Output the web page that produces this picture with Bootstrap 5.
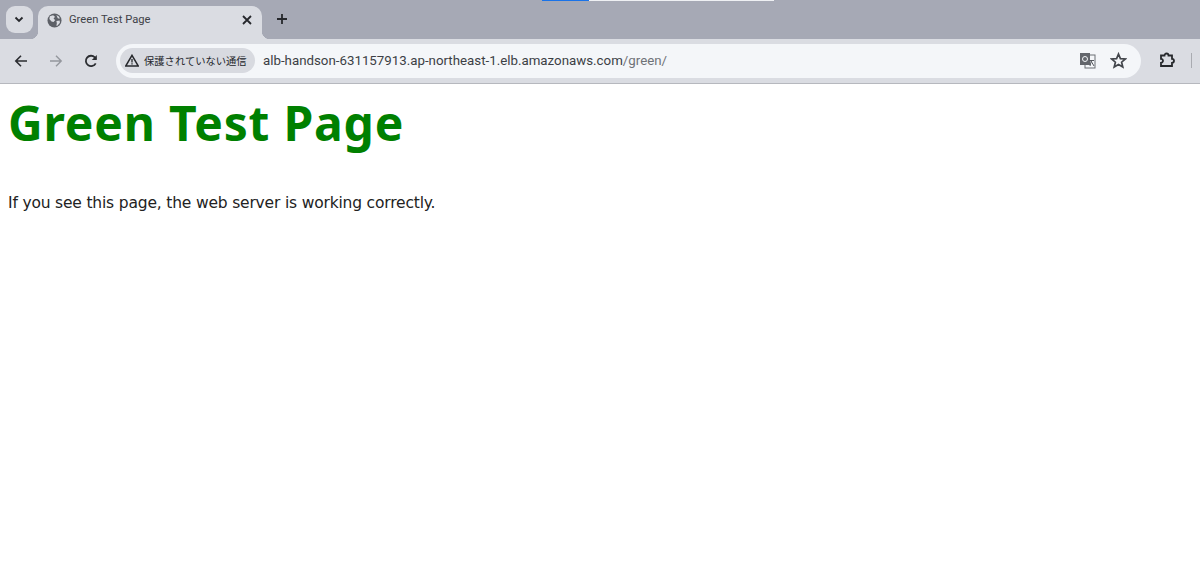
<!DOCTYPE html>
<html lang="ja">
<head>
<meta charset="utf-8">
<title>Green Test Page</title>
<link href="https://cdn.jsdelivr.net/npm/bootstrap@5.3.0/dist/css/bootstrap.min.css" rel="stylesheet">
<style>
html,body{height:100%;overflow:hidden;background:#fff}
body{font-family:"Roboto","Noto Sans CJK JP",sans-serif}
.strip{height:39px;background:#a6a9b5;position:relative;padding-left:6px}
.loadline{position:absolute;top:0;left:542px;width:232px;height:1px;background:linear-gradient(90deg,#1a73e8 0,#1a73e8 47px,#eef0f3 47px)}
.tabmenu{width:27px;height:27px;margin-top:6px;background:#d9dbe1;border-radius:9px;margin-right:5px;padding-right:2px}
.chrometab{width:224px;height:33px;margin-top:6px;background:#dadce2;border-radius:10px 10px 0 0;padding:0 10px 5px 9px;position:relative}
.chrometab::before,.chrometab::after{content:"";position:absolute;bottom:0;width:8px;height:8px}
.chrometab::before{left:-8px;background:radial-gradient(circle at 0 0,transparent 8px,#dadce2 8.5px)}
.chrometab::after{right:-8px;background:radial-gradient(circle at 100% 0,transparent 8px,#dadce2 8.5px)}
.tabtitle{font-size:11.2px;color:#3f4248;margin-left:7px}
.newtab{width:24px;height:24px;margin:7px 0 0 6px}
.toolbar{height:45px;background:#dadce2;border-bottom:1px solid #b6b8be;padding:0 8px 1px 9px}
.navslot{width:24px;height:24px;margin-right:11px;flex:none}
.omni{width:1025px;height:34px;margin-left:2px;flex:none;background:#f4f6f9;border-radius:17px;padding:0 14px 0 4px}
.chipbox{height:25px;width:135px;flex:none;background:#d8dae0;border-radius:13px;padding:0 0 0 5px;font-size:10.3px;color:#24262b;white-space:nowrap}
.chiptext{margin-left:5px;font-family:"Noto Sans CJK JP",sans-serif}
.urltext{font-size:13.3px;color:#3c3f45;margin-left:8px;white-space:nowrap}
.urlpath{color:#6f7277}
.transicon{margin-right:14px}
.extslot{margin-left:17px}
.sepbar{width:1px;height:15px;background:#a9abb1;margin-left:16px}
.pagebody{padding:0 8px}
.pagehead{color:#008000;font-family:"Noto Sans","Noto Sans CJK JP",sans-serif;font-size:48px;font-weight:700;line-height:56px;margin:11px 0 0;letter-spacing:.8px}
.pagetext{color:#222;font-family:"DejaVu Sans","Noto Sans CJK JP",sans-serif;font-size:15.5px;line-height:20px;margin:42px 0 0;letter-spacing:-.18px}
</style>
</head>
<body>
<div class="strip d-flex align-items-start">
  <div class="loadline"></div>
  <div class="tabmenu d-flex align-items-center justify-content-center">
    <svg width="10" height="8" viewBox="0 0 10 8"><path d="M1.5 1.5 5 5l3.5-3.500" fill="none" stroke="#26282c" stroke-width="1.800"/></svg>
  </div>
  <div class="chrometab d-flex align-items-center">
    <svg width="15" height="15" viewBox="0 0 16 16"><circle cx="8" cy="8" r="7.500" fill="#5d6067"/><path d="M3 3.500 6.500 2.500 8.500 4 7 6 8.800 7.500 7 9.500 4.800 9 2.500 6.500Z M10 8.500 13.500 8 13.800 10.500 11 13.500 10 13.500 10.500 11Z M10 2 13 4 13.500 6 11.500 5.500Z" fill="#dadce2"/></svg>
    <span class="tabtitle flex-grow-1">Green Test Page</span>
    <svg width="10" height="10" viewBox="0 0 10 10"><path d="M1 1l8 8M9 1 1 9" stroke="#26282c" stroke-width="1.800"/></svg>
  </div>
  <div class="newtab d-flex align-items-center justify-content-center ms-2">
    <svg width="12" height="12" viewBox="0 0 12 12"><path d="M6 1v10M1 6h10" stroke="#26282c" stroke-width="1.800"/></svg>
  </div>
</div>
<div class="toolbar d-flex align-items-center">
  <div class="navslot d-flex align-items-center justify-content-center">
    <svg width="14" height="14" viewBox="0 0 14 14"><path d="M13 7H2M7 1.800 1.800 7 7 12.200" fill="none" stroke="#2b2d31" stroke-width="1.600"/></svg>
  </div>
  <div class="navslot d-flex align-items-center justify-content-center">
    <svg width="14" height="14" viewBox="0 0 14 14"><path d="M1 7h11M7 1.800 12.200 7 7 12.200" fill="none" stroke="#94979d" stroke-width="1.400"/></svg>
  </div>
  <div class="navslot d-flex align-items-center justify-content-center">
    <svg width="14" height="14" viewBox="0 0 14 14"><path d="M11.700 9.300A5.200 5.200 0 1 1 10.800 3.300L12 4.800" fill="none" stroke="#2b2d31" stroke-width="1.800"/><path d="M12.800 1v5h-5z" fill="#2b2d31"/></svg>
  </div>
  <div class="omni d-flex align-items-center">
    <div class="chipbox d-flex align-items-center">
      <svg width="14" height="13" viewBox="0 0 14 13"><path d="M7 1.300 13.300 12H.7Z" fill="none" stroke="#26282c" stroke-width="1.500"/><path d="M7 5v3.500M7 9.300v1.300" stroke="#26282c" stroke-width="1.300"/></svg>
      <span class="chiptext">保護されていない通信</span>
    </div>
    <span class="urltext flex-grow-1">alb-handson-631157913.ap-northeast-1.elb.amazonaws.com<span class="urlpath">/green/</span></span>
    <svg width="17" height="17" viewBox="0 0 17 17" class="transicon"><rect x="6" y="3" width="10" height="13" fill="#f4f6f9" stroke="#6b6e74"/><rect x="1" y="1" width="10" height="12" fill="#63666c"/><circle cx="6" cy="7" r="2.500" fill="none" stroke="#f4f6f9"/><path d="M10 8.500h5M12.500 8 11 14M12 9l3 5" stroke="#55585e" fill="none"/></svg>
    <svg width="17" height="17" viewBox="0 0 17 17"><path d="M8.500 2 10.400 6.600 15.400 7 11.600 10.200 12.800 15 8.500 12.400 4.200 15 5.400 10.200 1.600 7 6.600 6.600Z" fill="none" stroke="#43464c" stroke-width="1.700"/></svg>
  </div>
  <div class="extslot d-flex align-items-center">
    <svg width="17" height="17" viewBox="0 0 17 17"><path d="M6.500 3.500a2 2 0 0 1 4 0H14v3.300a2 2 0 0 1 0 4V14H3v-3.200a2 2 0 0 0 0-4V3.500Z" fill="none" stroke="#26282c" stroke-width="1.800"/></svg>
    <div class="sepbar"></div>
  </div>
</div>
<div class="pagebody">
  <h1 class="pagehead">Green Test Page</h1>
  <p class="pagetext">If you see this page, the web server is working correctly.</p>
</div>
</body>
</html>
